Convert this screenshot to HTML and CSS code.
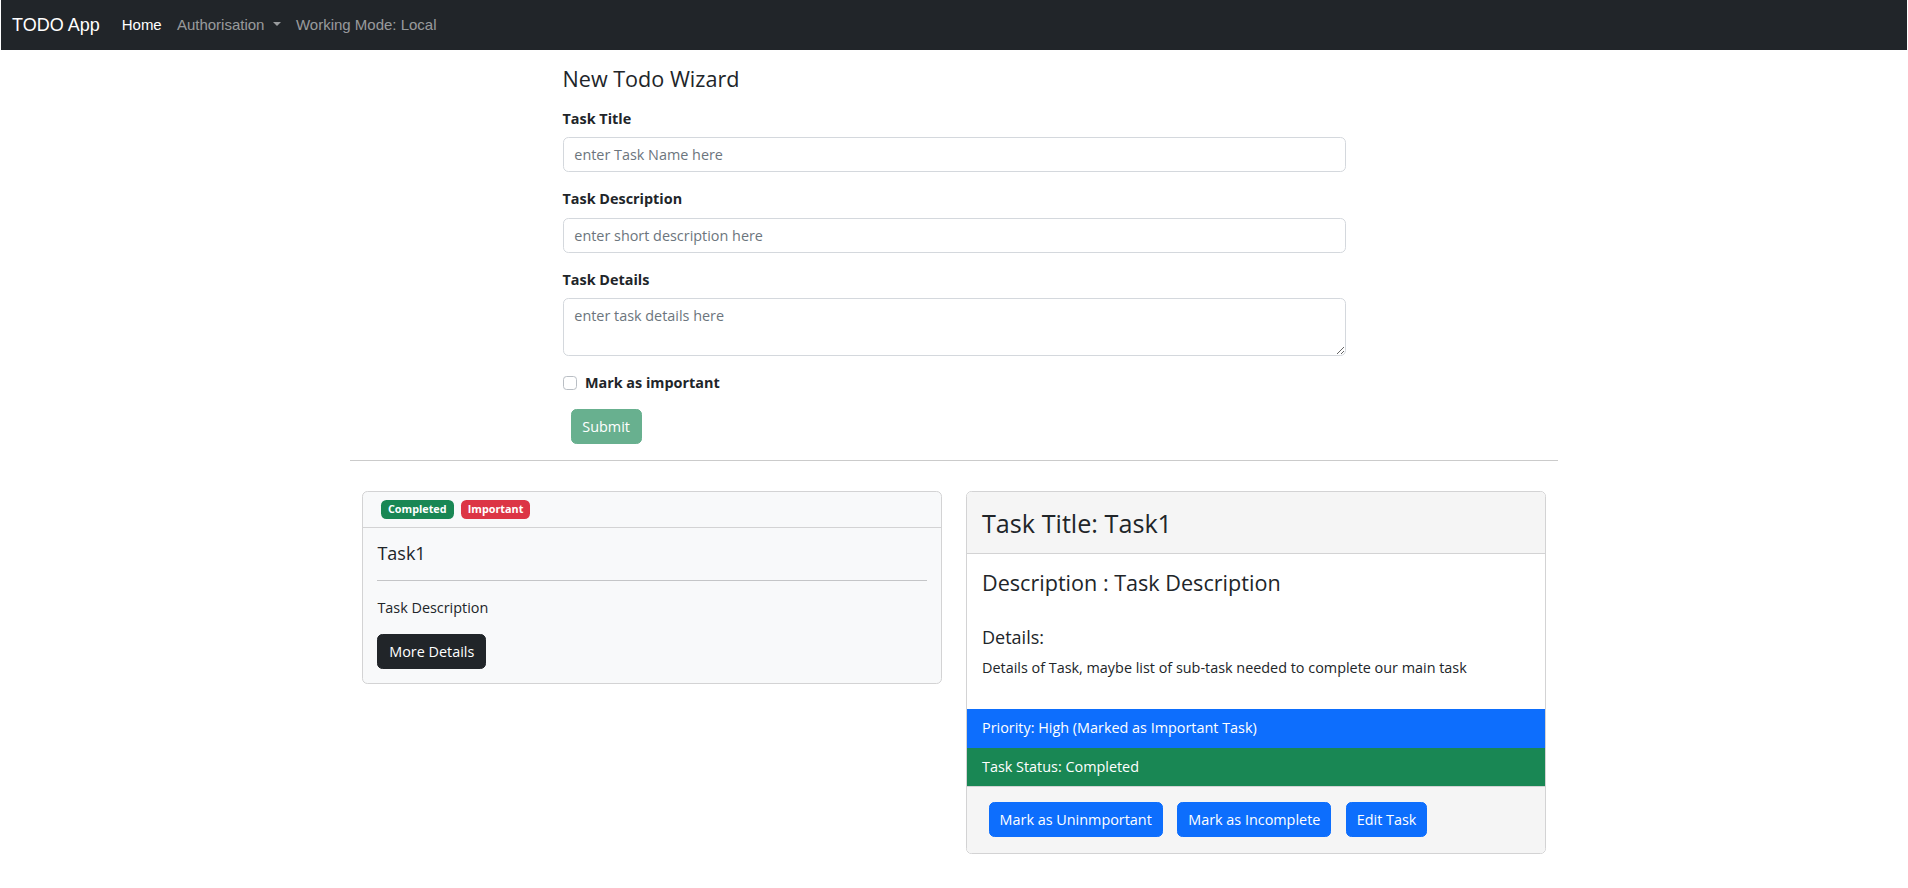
FILE: index.html
```html
<!DOCTYPE html>
<html lang="en">
<head>
<meta charset="utf-8">
<title>TODO App</title>
<link rel="stylesheet" href="styles.css">
</head>
<body>
<nav class="navbar">
  <a class="brand" href="#">TODO App</a>
  <ul class="nav">
    <li><a class="nav-link active" href="#">Home</a></li>
    <li><a class="nav-link dropdown" href="#">Authorisation<span class="caret"></span></a></li>
    <li><a class="nav-link" href="#">Working Mode: Local</a></li>
  </ul>
</nav>

<main class="container">
  <form class="wizard">
    <h4 class="wizard-title">New Todo Wizard</h4>
    <div class="field">
      <label class="field-label" for="title">Task Title</label>
      <input class="control" id="title" type="text" placeholder="enter Task Name here">
    </div>
    <div class="field">
      <label class="field-label" for="desc">Task Description</label>
      <input class="control" id="desc" type="text" placeholder="enter short description here">
    </div>
    <div class="field">
      <label class="field-label" for="details">Task Details</label>
      <textarea class="control textarea" id="details" placeholder="enter task details here"></textarea>
    </div>
    <div class="check-row">
      <input class="check" id="important" type="checkbox">
      <label class="check-label" for="important">Mark as important</label>
    </div>
    <button class="btn btn-submit" type="button" disabled>Submit</button>
  </form>

  <hr class="divider">

  <div class="cards">
    <div class="card card-light">
      <div class="card-header badges">
        <span class="badge badge-green">Completed</span>
        <span class="badge badge-red">Important</span>
      </div>
      <div class="card-body task-body">
        <h5 class="task-name">Task1</h5>
        <hr class="card-rule">
        <p class="task-desc">Task Description</p>
        <button class="btn btn-dark" type="button">More Details</button>
      </div>
    </div>

    <div class="card">
      <div class="card-header detail-header">
        <h3 class="detail-title">Task Title: Task1</h3>
      </div>
      <div class="card-body detail-body">
        <h4 class="detail-desc">Description : Task Description</h4>
        <h5 class="detail-sub">Details:</h5>
        <p class="detail-text">Details of Task, maybe list of sub-task needed to complete our main task</p>
      </div>
      <ul class="status-list">
        <li class="status status-blue">Priority: High (Marked as Important Task)</li>
        <li class="status status-green">Task Status: Completed</li>
      </ul>
      <div class="card-footer">
        <button class="btn btn-primary" type="button">Mark as Uninmportant</button>
        <button class="btn btn-primary" type="button">Mark as Incomplete</button>
        <button class="btn btn-primary" type="button">Edit Task</button>
      </div>
    </div>
  </div>
</main>
</body>
</html>
```

FILE: styles.css
```css
* {
  box-sizing: border-box;
}

body {
  margin: 0;
  font-family: "Open Sans", "Noto Sans", sans-serif;
  font-size: 14.4px;
  line-height: 1.5;
  color: #212529;
  background: #fff;
}

/* Navbar */
.navbar {
  margin: 0 1px;
  height: 50px;
  background: #212529;
  display: flex;
  align-items: center;
  padding: 0 11px;
  font-family: "Liberation Sans", Arial, sans-serif;
}

.brand {
  color: #fff;
  font-size: 18px;
  text-decoration: none;
  margin-right: 14.4px;
  line-height: 1.5;
}

.nav {
  display: flex;
  list-style: none;
  margin: 0;
  padding: 0;
}

.nav-link {
  display: block;
  padding: 0 7.6px;
  font-size: 15px;
  color: rgba(255, 255, 255, 0.55);
  text-decoration: none;
}

.nav-link.active {
  color: #fff;
}

.caret {
  display: inline-block;
  margin-left: 0.55em;
  vertical-align: 0.255em;
  border-top: 0.3em solid;
  border-right: 0.3em solid transparent;
  border-left: 0.3em solid transparent;
}

/* Layout */
.container {
  width: 1208px;
  margin: 0 auto;
  padding-top: 15.7px;
}

.wizard {
  width: 783px;
  margin: 0 auto;
}

.wizard-title {
  font-size: 21.6px;
  font-weight: 400;
  line-height: 1.2;
  margin: 0 0 16px;
}

.field {
  margin-bottom: 16px;
}

.field-label {
  display: block;
  font-weight: 700;
  margin-bottom: 8px;
}

.control {
  display: block;
  width: 100%;
  height: 35px;
  padding: 5.4px 10.8px;
  font-family: inherit;
  font-size: 14.4px;
  line-height: 1.5;
  color: #212529;
  background: #fff;
  border: 1px solid #d4d8dd;
  border-radius: 5.4px;
  outline: none;
}

.control::placeholder {
  color: #6c757d;
}

.textarea {
  height: 58px;
  resize: vertical;
}

.check-row {
  display: flex;
  align-items: flex-start;
  margin-bottom: 15px;
}

.check {
  appearance: none;
  -webkit-appearance: none;
  width: 14.4px;
  height: 14.4px;
  margin: 3.4px 8px 0 0;
  border: 1px solid #b9bec4;
  border-radius: 3.6px;
  background: #fff;
}

.check-label {
  font-weight: 700;
}

.btn {
  display: inline-block;
  height: 35px;
  padding: 0 10.8px;
  font-family: inherit;
  font-size: 14.4px;
  line-height: 33px;
  color: #fff;
  border: 1px solid transparent;
  border-radius: 5.4px;
  cursor: pointer;
}

.btn-submit {
  margin-left: 8px;
  background: #198754;
  border-color: #198754;
  opacity: 0.65;
}

.divider {
  margin: 16px 0 0;
  border: 0;
  border-top: 1px solid #cbcbcb;
}

/* Cards */
.cards {
  display: grid;
  grid-template-columns: 1fr 1fr;
  gap: 24px;
  align-items: start;
  padding: 0 12px;
  margin-top: 30px;
}

.card {
  border: 1px solid #d3d3d4;
  border-radius: 5.4px;
  background: #fff;
  overflow: hidden;
}

.card-light {
  background: #f8f9fa;
}

.card-header {
  border-bottom: 1px solid #d3d3d4;
}

.badges {
  display: flex;
  align-items: center;
  padding: 8px 14.4px;
}

.badge {
  display: inline-block;
  margin: 0 3.6px;
  padding: 4.1px 7px;
  font-size: 10.8px;
  font-weight: 700;
  line-height: 1;
  color: #fff;
  border-radius: 5.4px;
}

.badge-green {
  background: #198754;
}

.badge-red {
  background: #dc3545;
}

.card-body {
  padding: 14.4px;
}

.task-body {
  padding-top: 15.4px;
}

.task-name {
  font-size: 18px;
  font-weight: 500;
  line-height: 1.2;
  margin: 0;
}

.card-rule {
  margin: 14.8px 0 16px;
  border: 0;
  border-top: 1px solid #c4c5c7;
}

.task-desc {
  margin: 0 0 15.4px;
}

.btn-dark {
  background: #212529;
  border-color: #212529;
}

.detail-header {
  background: #f5f5f5;
  padding: 15.5px 15px;
}

.detail-title {
  font-size: 25.2px;
  font-weight: 500;
  line-height: 1.2;
  margin: 0;
}

.detail-body {
  padding: 16px 15px 16px;
}

.detail-desc {
  font-size: 21.6px;
  font-weight: 500;
  line-height: 1.2;
  margin: 0 0 30.6px;
}

.detail-sub {
  font-size: 18px;
  font-weight: 500;
  line-height: 1.2;
  margin: 0 0 9px;
}

.detail-text {
  margin: 0 0 14.4px;
}

.status-list {
  list-style: none;
  margin: 0;
  padding: 0;
}

.status {
  height: 38.5px;
  padding: 0 15px;
  line-height: 38.5px;
  color: #fff;
}

.status-blue {
  background: #0d6efd;
}

.status-green {
  background: #198754;
}

.card-footer {
  display: flex;
  background: #f5f5f5;
  border-top: 1px solid #d3d3d4;
  padding: 14.5px 14.4px 16.5px;
}

.btn-primary {
  margin: 0 7.2px;
  padding: 0 10px;
  background: #0d6efd;
  border-color: #0d6efd;
}
```
